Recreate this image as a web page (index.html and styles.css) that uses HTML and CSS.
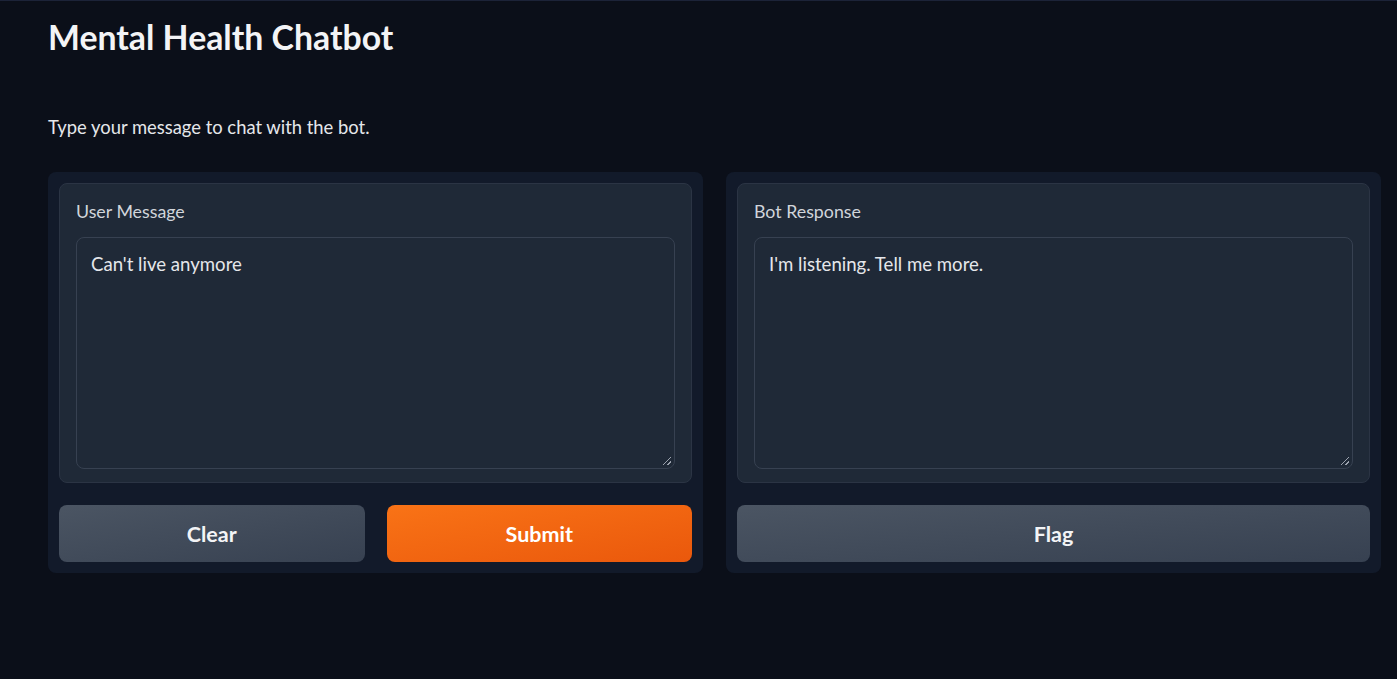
FILE: index.html
```html
<!DOCTYPE html>
<html>
<head>
<meta charset="utf-8">
<link rel="stylesheet" href="styles.css">
</head>
<body>
<div class="page">
  <h1 class="title">Mental Health Chatbot</h1>
  <p class="desc">Type your message to chat with the bot.</p>
  <div class="row">
    <div class="panel">
      <div class="block">
        <div class="label">User Message</div>
        <div class="textarea">Can't live anymore<span class="grip"></span></div>
      </div>
      <div class="btns">
        <button class="btn secondary">Clear</button>
        <button class="btn primary">Submit</button>
      </div>
    </div>
    <div class="panel">
      <div class="block">
        <div class="label">Bot Response</div>
        <div class="textarea">I'm listening. Tell me more.<span class="grip"></span></div>
      </div>
      <div class="btns">
        <button class="btn secondary">Flag</button>
      </div>
    </div>
  </div>
</div>
</body>
</html>
```
FILE: styles.css
```css
html, body {
  margin: 0;
  padding: 0;
  background: #0b0f19;
  height: 100%;
}
body {
  font-family: "Lato", "Noto Sans", sans-serif;
  color: #f3f4f6;
  border-top: 1px solid #1c2338;
  box-sizing: border-box;
}
.page {
  padding: 0 16px 0 48px;
}
.title {
  margin: 0;
  padding-top: 16px;
  font-size: 33.8px;
  font-weight: 700;
  line-height: 40px;
  color: #f3f4f6;
}
.desc {
  margin: 0;
  padding-top: 58px;
  font-size: 18.4px;
  line-height: 24px;
  color: #e5e7eb;
}
.row {
  display: flex;
  gap: 23px;
  margin-top: 33px;
}
.panel {
  flex: 1;
  background: #121a2a;
  border-radius: 8px;
  padding: 11px;
  display: flex;
  flex-direction: column;
  gap: 22px;
}
.block {
  background: #1f2937;
  border: 1px solid #2b3444;
  border-radius: 8px;
  padding: 16px 16px 13px 16px;
}
.label {
  font-size: 17.8px;
  line-height: 22px;
  color: #d1d5db;
  margin-bottom: 15px;
}
.textarea {
  position: relative;
  height: 206px;
  border: 1px solid #374151;
  border-radius: 8px;
  background: #1f2937;
  padding: 14px 14px 10px 14px;
  font-size: 18.6px;
  line-height: 24px;
  color: #e5e7eb;
}
.grip {
  position: absolute;
  right: 3px;
  bottom: 3px;
  width: 8px;
  height: 8px;
  background: linear-gradient(135deg, transparent 45%, #9ca3af 45%, #9ca3af 55%, transparent 55%, transparent 70%, #9ca3af 70%, #9ca3af 82%, transparent 82%);
}
.btns {
  display: flex;
  gap: 22px;
}
.btn {
  flex: 1;
  height: 57px;
  border: none;
  border-radius: 8px;
  font-family: "Lato", "Noto Sans", sans-serif;
  font-size: 21.5px;
  font-weight: 700;
  color: #f3f4f6;
}
.secondary {
  background: linear-gradient(to bottom right, #4b5563, #374151);
}
.primary {
  background: linear-gradient(to bottom right, #f97316, #ea580c);
  color: #fff;
}
```
